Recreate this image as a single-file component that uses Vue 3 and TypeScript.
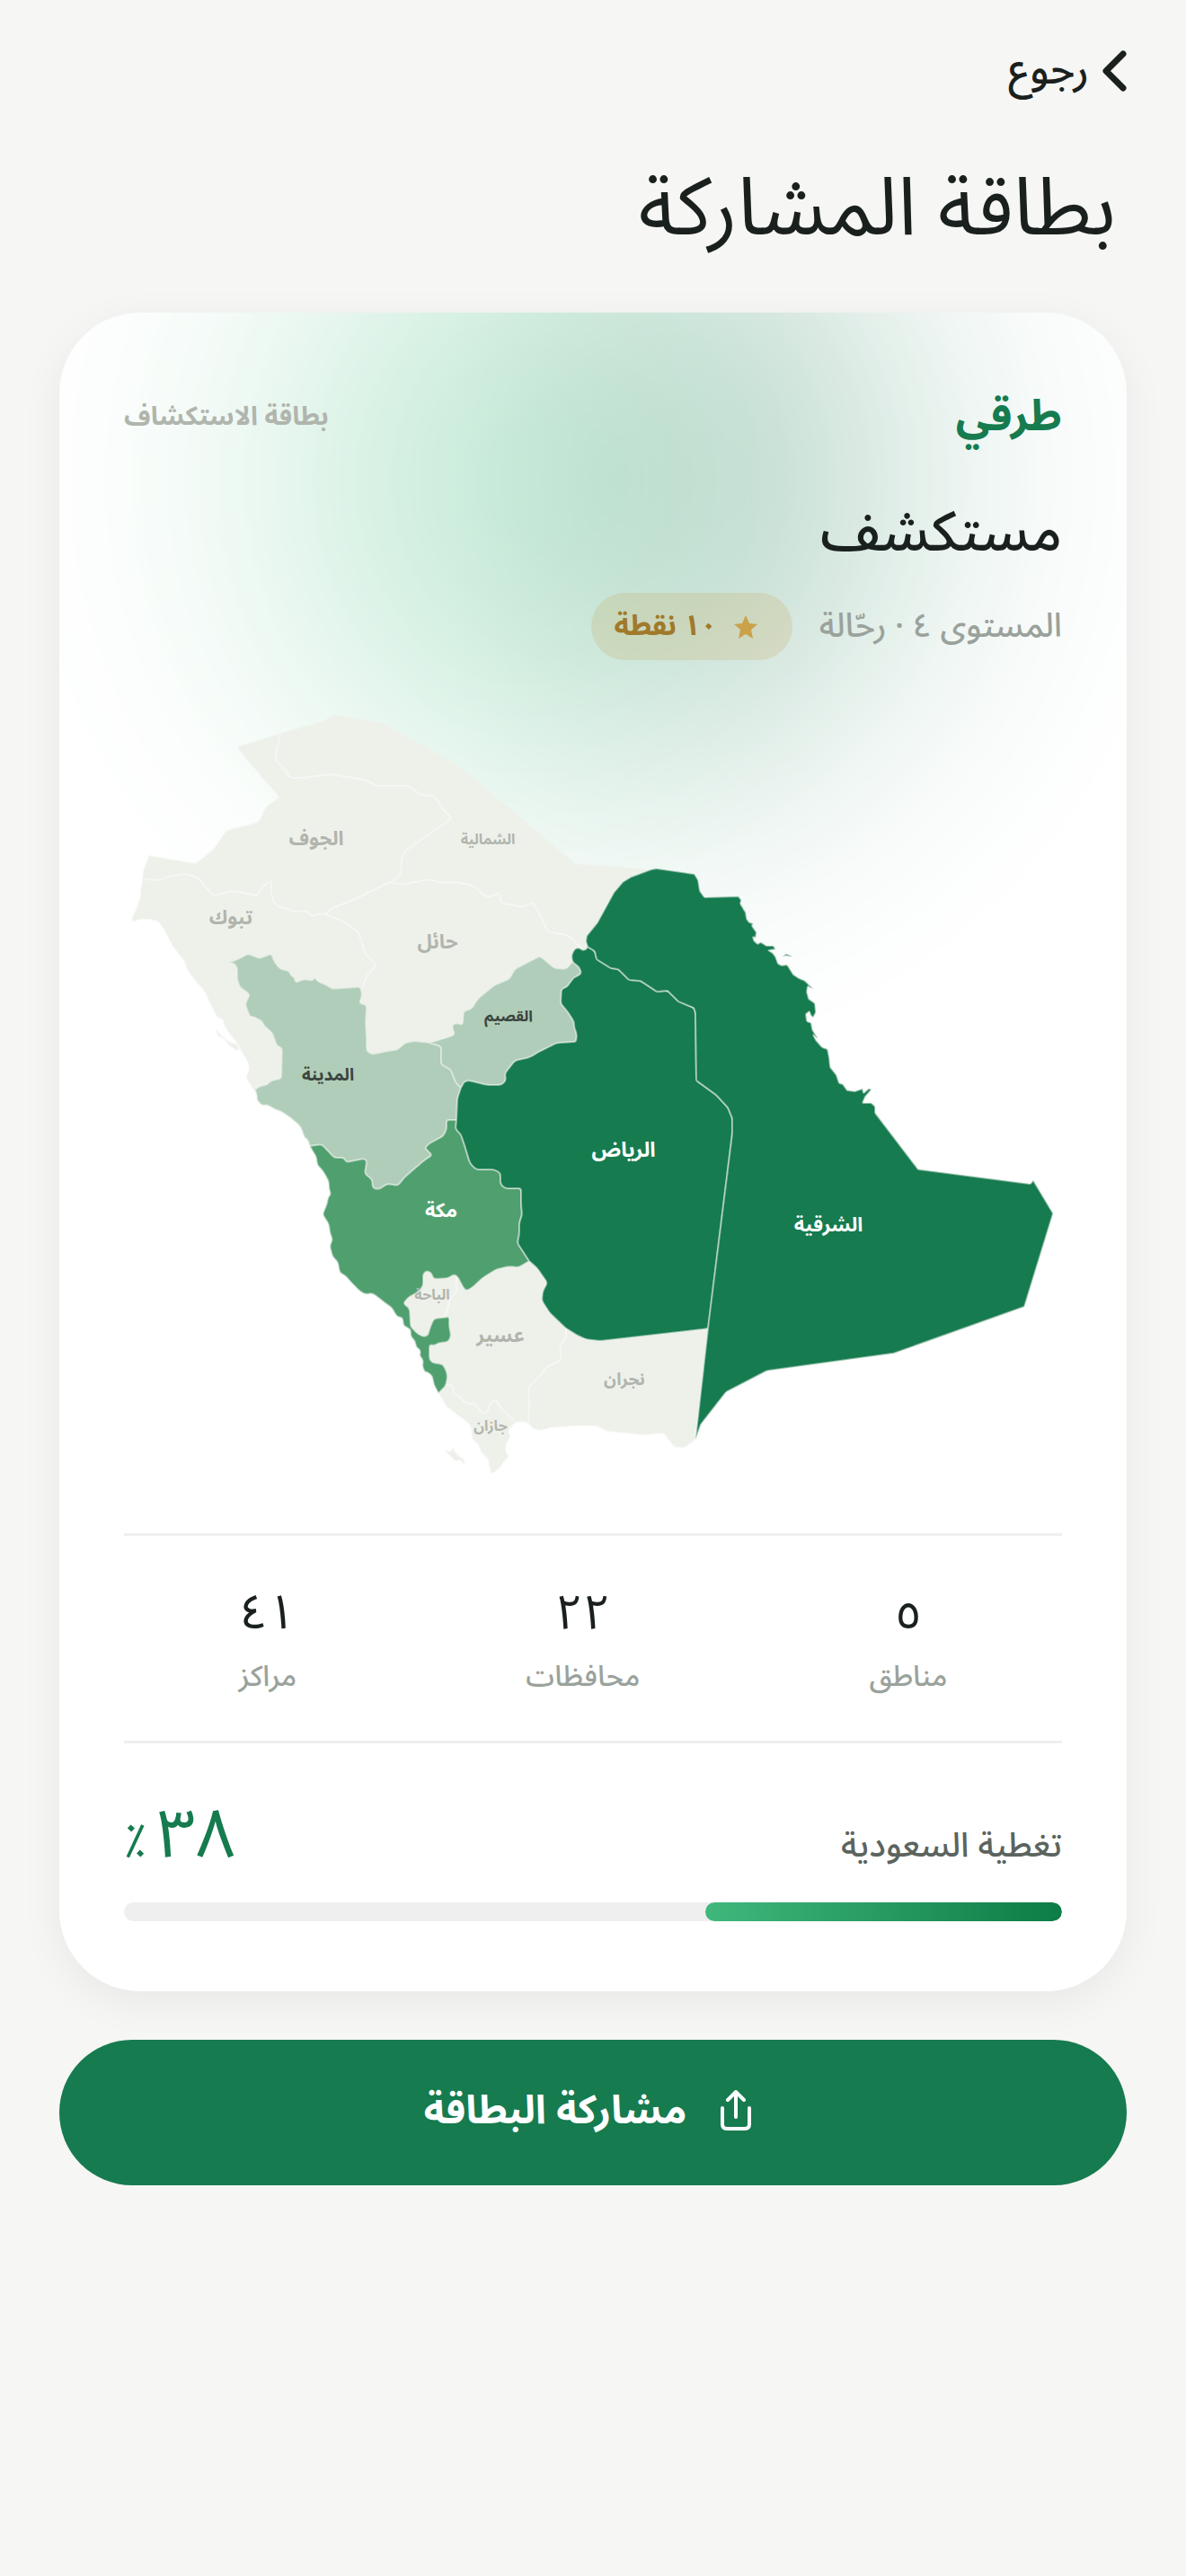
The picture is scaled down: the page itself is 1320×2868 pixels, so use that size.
<script setup lang="ts">
type Point = [number, number]

interface Label {
  text: string
  x: number
  y: number
  size: number
  tone: 'muted' | 'ink' | 'light'
}

const stats = [
  { value: '٥', label: 'مناطق' },
  { value: '٢٢', label: 'محافظات' },
  { value: '٤١', label: 'مراكز' },
]

const coverage = 38

function parse(source: string): Point[] {
  return source
    .trim()
    .split(/\s+/)
    .map((pair) => pair.split(',').map(Number) as Point)
}

function between(a: Point, b: Point, distance: number): string {
  const length = Math.hypot(b[0] - a[0], b[1] - a[1]) || 1
  const t = Math.min(distance / length, 0.5)
  return `${(a[0] + (b[0] - a[0]) * t).toFixed(1)} ${(a[1] + (b[1] - a[1]) * t).toFixed(1)}`
}

// Border lines with every bend rounded off by the given radius.
function line(points: Point[], radius = 4): string {
  let d = `M${points[0].join(' ')}`
  for (let i = 1; i < points.length - 1; i++) {
    d += `L${between(points[i], points[i - 1], radius)}Q${points[i].join(' ')} ${between(points[i], points[i + 1], radius)}`
  }
  return `${d}L${points[points.length - 1].join(' ')}`
}

function area(...parts: Point[][]): string {
  return `${line(parts.flat(), 3)}Z`
}

const back = (points: Point[]): Point[] => [...points].reverse()

// Shared borders
const madinahNorth = parse(`284,1213 290,1209 297,1208 302,1203 313,1201 314,1167 308,1164 303,1150 293,1141 292,1137 282,1132 278,1132 273,1118 278,1107 267,1099 264,1090 264,1077 260,1072 254,1072 265,1068 276,1062 289,1067 302,1062 306,1072 312,1079 322,1081 323,1085 328,1089 329,1094 339,1090 348,1092 350,1088 354,1093 362,1096 370,1101 397,1099 401,1099 403,1107 400,1117 408,1119 407,1140 408,1157 408,1170 414,1174 432,1170 442,1169 451,1161 462,1159 478,1161`)
const madinahQassim = parse(`478,1161 491,1165 491,1185 502,1191 507,1205 513,1211`)
const madinahRiyadh = parse(`513,1211 509,1223 508,1247`)
const madinahMakkah = parse(`508,1247 497,1247 497,1258 493,1265 478,1273 473,1278 481,1286 472,1292 450,1311 443,1320 431,1318 422,1324 415,1323 414,1313 406,1307 408,1293 406,1290 385,1294 383,1289 372,1289 358,1274 345,1276`)
const madinahCoast = parse(`345,1276 342,1268 339,1267 335,1255 329,1249 320,1242 312,1237 308,1236 297,1230 292,1231 286,1225 286,1220`)
const qassimNorth = parse(`478,1161 498,1155 506,1152 503,1142 507,1139 515,1141 516,1126 525,1123 532,1112 550,1097 567,1090 573,1079 600,1065 603,1066 617,1078 630,1079 637,1071`)
const qassimRiyadh = parse(`637,1071 645,1077 647,1084 638,1089 631,1099 625,1101 624,1117 633,1128 639,1138 639,1143 642,1152 641,1160 620,1161 600,1171 590,1177 573,1181 562,1195 563,1203 558,1208 542,1208 522,1203 517,1204 513,1211`)
const makkahRiyadh = parse(`508,1247 507,1257 513,1263 518,1278 523,1295 530,1302 550,1302 557,1306 557,1318 562,1323 580,1323 580,1340 581,1353 578,1361 578,1373 576,1384 589,1404`)
const makkahSouth = parse(`589,1404 577,1411 567,1410 553,1413 538,1422 525,1434 519,1437 516,1434 509,1421 505,1419 499,1423 485,1424 482,1423 480,1417 475,1415 471,1418 471,1432 463,1440 455,1444 449,1451 456,1457 457,1477 465,1485 471,1488 476,1487 479,1477 483,1468 493,1467 500,1466 500,1477 502,1487 499,1494 489,1495 483,1498 478,1497 478,1513 481,1517 493,1519 497,1527 498,1533 496,1543 488,1551`)
const makkahCoast = parse(`488,1551 483,1542 481,1532 475,1527 473,1528 470,1521 471,1514 467,1510 468,1503 463,1500 462,1493 457,1488 457,1480 449,1476 448,1467 442,1466 437,1458 436,1456 425,1448 415,1440 406,1441 400,1437 392,1429 384,1420 378,1417 376,1405 370,1399 367,1387 370,1380 367,1372 366,1363 359,1352 364,1340 365,1333 368,1330 366,1322 366,1316 362,1308 358,1302 353,1297 352,1288 347,1280`)
const riyadhEast = parse(`654,1054 662,1059 664,1068 680,1078 688,1079 700,1091 713,1092 731,1104 743,1103 755,1115 772,1122 774,1127 775,1203 797,1219 810,1233 815,1245 815,1262 788,1479`)
const riyadhSouth = parse(`788,1479 782,1480 667,1493 652,1491 643,1487 630,1479 612,1462 603,1448 604,1438 609,1428 598,1412 589,1404`)

const base = area(
  parse(`166,953 218,962 239,945 252,925 288,916 297,898 312,888 292,865 264,832 312,817 361,803 370,796 429,806 515,856 640,962 720,968 760,1000 760,1300 788,1479 773,1603 762,1611 751,1611 739,1595 717,1597 675,1593 664,1587 638,1587 613,1589 602,1592 593,1590 588,1584 582,1582 574,1583 568,1588 565,1594 568,1600 563,1606 562,1616 566,1622 560,1627 559,1630 552,1637 547,1641 545,1632 544,1624 535,1616 534,1609 526,1602 525,1590 522,1584 508,1574 497,1565 488,1550 490,1535 475,1512 464,1490 453,1465 440,1300 300,1220 284,1215 279,1207 274,1200 278,1192 277,1183 270,1172 265,1162 257,1152 250,1142 249,1135 242,1132 237,1122 228,1103 218,1092 208,1078 207,1072 192,1052 185,1038 178,1027 175,1025 167,1023 155,1023 148,1026 147,1022 152,1013 157,998 157,990 159,980 160,970`),
)
const madinah = area(madinahNorth, madinahQassim, madinahRiyadh, madinahMakkah, madinahCoast)
const qassim = area(qassimNorth, qassimRiyadh, back(madinahQassim))
const makkah = area(back(madinahMakkah), makkahRiyadh, makkahSouth, makkahCoast)
const riyadh = area(
  riyadhEast,
  riyadhSouth,
  back(makkahRiyadh),
  back(madinahRiyadh),
  back(qassimRiyadh),
  parse(`636,1063 640,1056 645,1055 648,1058 652,1057`),
)
const eastern = line(
  [
    ...parse(`654,1054 652,1048 653,1042 665,1027 683,994 693,982 703,976 725,968 730,967 773,973 777,980 779,992 784,999 822,998 825,1002 824,1006 827,1011 830,1016 831,1023 834,1027 838,1028 837,1031 842,1038 841,1044 838,1043 839,1047 843,1051 847,1049 853,1053 861,1053 863,1057 855,1058 860,1061 863,1065 866,1073 870,1075 876,1074 883,1085 889,1089 896,1092 900,1096 905,1101 899,1098 898,1104 900,1112 907,1117 908,1127 905,1133 902,1130 901,1126 897,1129 898,1137 903,1139 904,1146 910,1156 905,1152 908,1158 915,1166 921,1168 923,1178 924,1188 931,1197 934,1206 938,1207 943,1214 952,1215 960,1212 961,1217 967,1212 970,1213 963,1221 960,1228 970,1228 974,1232 974,1239 1022,1302 1147,1318 1150,1314 1172,1351 1140,1455 994,1507 854,1526 808,1550 780,1586 774,1603`),
    ...back(riyadhEast),
  ],
  1,
)

const innerBorders = [
  `312,817 307,840 307,847 314,853 323,866 338,866 367,862 407,868 419,875 455,875 468,885 482,886 485,888 493,901 503,911 450,948 447,955 446,973 437,982`,
  `160,979 180,980 185,976 207,973 220,977 237,997 260,992 286,997 292,987 302,980 302,997 307,1008 328,1015 341,1014 347,1020 357,1017 362,1018`,
  `362,1018 368,1012 397,1000 434,982 447,985 477,979 493,983 507,982 527,986 540,998 546,998 556,994 558,1006 570,1007 580,1010 593,1005 602,1020 608,1035 613,1038 632,1041 643,1052 648,1057`,
  `362,1018 383,1026 399,1038 407,1063 419,1074 408,1087 403,1100`,
  `509,1421 507,1430 509,1438 500,1446 499,1455 495,1466`,
  `497,1542 504,1542 505,1553 512,1555 517,1562 528,1563 539,1575 543,1570 546,1562 552,1558 555,1565 563,1573 573,1583`,
  `630,1479 630,1490 623,1497 625,1512 620,1517 609,1521 602,1531 588,1545 589,1560 588,1584`,
].map((source) => line(parse(source)))

const islands = [
  'M241 1147l4 5 5 4-7-3zM251 1158l6 3 6 2 3 5-3 1-8-6z',
  'M496 1615l5 2 4-4 1 4 5 5 4 2 2 6-5-5-5 1-5-5z',
]
const easternIsles = 'M871 1065l4-3 7 3-8-1z'

const labels: Label[] = [
  { text: 'الجوف', x: 352, y: 941, size: 22, tone: 'muted' },
  { text: 'الشمالية', x: 543, y: 940, size: 16, tone: 'muted' },
  { text: 'تبوك', x: 257, y: 1029, size: 22, tone: 'muted' },
  { text: 'حائل', x: 487, y: 1056, size: 22, tone: 'muted' },
  { text: 'القصيم', x: 566, y: 1137, size: 17, tone: 'ink' },
  { text: 'المدينة', x: 365, y: 1203, size: 19, tone: 'ink' },
  { text: 'الرياض', x: 694, y: 1288, size: 23, tone: 'light' },
  { text: 'مكة', x: 491, y: 1355, size: 22, tone: 'light' },
  { text: 'الشرقية', x: 922, y: 1371, size: 22, tone: 'light' },
  { text: 'الباحة', x: 481, y: 1447, size: 16, tone: 'muted' },
  { text: 'عسير', x: 557, y: 1494, size: 22, tone: 'muted' },
  { text: 'نجران', x: 695, y: 1542, size: 19, tone: 'muted' },
  { text: 'جازان', x: 546, y: 1593, size: 16, tone: 'muted' },
]
</script>

<template>
  <main class="page" dir="rtl" lang="ar">
    <nav class="nav">
      <button class="back" type="button">
        <svg class="chevron" viewBox="0 0 28 46" aria-hidden="true">
          <path d="M24 4 5 23l19 19" />
        </svg>
        <span>رجوع</span>
      </button>
    </nav>

    <h1 class="title">بطاقة المشاركة</h1>

    <article class="card">
      <header class="card-head">
        <span class="brand">طرقي</span>
        <span class="kind">بطاقة الاستكشاف</span>
      </header>
      <h2 class="name">مستكشف</h2>
      <div class="meta">
        <span class="level">المستوى ٤ · رحّالة</span>
        <span class="points">
          <svg class="star" viewBox="0 0 28 28" aria-hidden="true">
            <path d="m14 1 4 9 9 1-7 6 2 10-8-5-8 5 2-10-7-6 9-1z" />
          </svg>
          <span>١٠ نقطة</span>
        </span>
      </div>

      <svg class="map" viewBox="138 783 1044 876" role="img" aria-label="خريطة المناطق">
        <path class="region none" :d="base" />
        <path v-for="d in islands" :key="d" class="region none" :d="d" />
        <path v-for="d in innerBorders" :key="d" class="border" :d="d" />
        <path class="region low" :d="madinah" />
        <path class="region low" :d="qassim" />
        <path class="region mid" :d="makkah" />
        <path class="region full" :d="riyadh" />
        <path class="region full" :d="eastern" />
        <path class="region full" :d="easternIsles" />
        <text
          v-for="label in labels"
          :key="label.text"
          :class="['label', label.tone]"
          :x="label.x"
          :y="label.y"
          :font-size="label.size"
        >{{ label.text }}</text>
      </svg>

      <section class="stats">
        <div v-for="stat in stats" :key="stat.label" class="stat">
          <span class="value">{{ stat.value }}</span>
          <span class="caption">{{ stat.label }}</span>
        </div>
      </section>

      <section class="coverage">
        <div class="coverage-row">
          <span class="coverage-label">تغطية السعودية</span>
          <span class="percent"><span class="number">٣٨</span><span class="sign">٪</span></span>
        </div>
        <div class="bar" role="progressbar" aria-label="تغطية السعودية" :aria-valuenow="coverage" aria-valuemin="0" aria-valuemax="100">
          <div class="fill" :style="{ width: coverage + '%' }"></div>
        </div>
      </section>
    </article>

    <button class="share" type="button">
      <svg class="share-icon" viewBox="0 0 34 46" aria-hidden="true">
        <path d="M17 30V3M8 11l9-9 9 9M2 20v18q0 5 5 5h20q5 0 5-5V20" />
      </svg>
      <span>مشاركة البطاقة</span>
    </button>
  </main>
</template>

<style>
html,
body {
  background: #f6f6f4;
}
</style>

<style scoped>
.page {
  box-sizing: border-box;
  min-height: 100vh;
  padding: 44px 66px 66px;
  background: #f6f6f4;
  color: #1a201d;
  font-family: "Noto Sans Arabic", "IBM Plex Sans Arabic", "Noto Sans", "DejaVu Sans", sans-serif;
}
.nav {
  display: flex;
}
.back {
  display: flex;
  align-items: center;
  gap: 14px;
  height: 72px;
  padding: 0 0 2px;
  border: 0;
  background: none;
  color: inherit;
  font-family: inherit;
  font-size: 46px;
  line-height: 68px;
  font-weight: 500;
}
.chevron {
  width: 28px;
  height: 46px;
  fill: none;
  stroke: currentColor;
  stroke-width: 7;
  stroke-linecap: round;
  stroke-linejoin: round;
}
.title {
  margin: 56px 12px 56px;
  font-size: 90px;
  line-height: 120px;
  font-weight: 400;
}
.card {
  position: relative;
  z-index: 0;
  padding: 72px 72px 78px;
  border-radius: 90px;
  background: #ffffff;
  box-shadow: 0 12px 48px rgba(0, 0, 0, 0.06);
  overflow: hidden;
}
.card::before {
  content: "";
  position: absolute;
  inset: 0;
  z-index: -1;
  background: linear-gradient(90deg, #3dba7c 37%, #167b4f 68%);
  mask-image: radial-gradient(circle 660px at 50% 186px, rgba(0, 0, 0, 0.3), rgba(0, 0, 0, 0.28) 15%, rgba(0, 0, 0, 0.24) 28%, rgba(0, 0, 0, 0.185) 40%, rgba(0, 0, 0, 0.12) 53%, rgba(0, 0, 0, 0.06) 68%, rgba(0, 0, 0, 0.02) 83%, transparent);
}
.card-head {
  display: flex;
  align-items: center;
  justify-content: space-between;
  height: 88px;
}
.brand {
  color: #167b4f;
  font-size: 48px;
  line-height: 88px;
  font-weight: 700;
}
.kind {
  color: #b0b5ad;
  font-size: 29px;
  line-height: 88px;
  font-weight: 700;
}
.name {
  margin: 32px 0 12px;
  font-size: 62px;
  line-height: 108px;
  font-weight: 500;
}
.meta {
  display: flex;
  align-items: center;
  gap: 30px;
  height: 75px;
}
.level {
  color: #9aa29c;
  font-size: 37px;
  line-height: 75px;
  font-weight: 500;
}
.points {
  display: flex;
  align-items: center;
  gap: 18px;
  padding-inline: 38px 26px;
  border-radius: 38px;
  background: rgba(201, 162, 74, 0.2);
  color: #a07a2a;
  font-size: 32px;
  line-height: 75px;
  font-weight: 700;
}
.star {
  width: 28px;
  height: 28px;
  fill: #c9a24a;
}
.map {
  display: block;
  width: 100%;
  height: auto;
  margin: 48px 0;
}
.region {
  stroke: rgba(240, 244, 238, 0.5);
  stroke-width: 2;
  stroke-linejoin: round;
}
.none {
  fill: #eef0ea;
}
.low {
  fill: #afcdb8;
}
.mid {
  fill: #509f6f;
}
.full {
  fill: #167b4f;
}
.border {
  fill: none;
  stroke: #f6f7f4;
  stroke-width: 2;
}
.label {
  font-weight: 700;
  text-anchor: middle;
}
.label.muted {
  fill: #b0b5ad;
}
.label.ink {
  fill: #3c443f;
}
.label.light {
  fill: #ffffff;
}
.stats {
  display: flex;
  justify-content: space-around;
  padding: 44px 0 42px;
  border-top: 3px solid #efefef;
  border-bottom: 3px solid #efefef;
}
.stat {
  display: flex;
  flex-direction: column;
  align-items: center;
}
.value {
  font-size: 54px;
  line-height: 84px;
}
.caption {
  color: #9aa29c;
  font-size: 32px;
  line-height: 58px;
  font-weight: 500;
}
.coverage-row {
  display: flex;
  align-items: baseline;
  justify-content: space-between;
  margin: 56px 0 28px;
}
.coverage-label {
  color: #5c645f;
  font-size: 38px;
  line-height: 60px;
  font-weight: 500;
}
.percent {
  color: #167b4f;
}
.number {
  font-size: 76px;
  line-height: 93px;
}
.sign {
  margin-inline-start: 12px;
  font-size: 52px;
  line-height: 60px;
}
.bar {
  height: 21px;
  border-radius: 11px;
  background: #efefef;
  overflow: hidden;
}
.fill {
  height: 100%;
  border-radius: 11px;
  background: linear-gradient(90deg, #40b87c, #0d7c46);
}
.share {
  display: flex;
  align-items: center;
  justify-content: center;
  gap: 38px;
  width: 100%;
  height: 162px;
  margin-top: 54px;
  padding: 0 12px 4px 0;
  border: 0;
  border-radius: 81px;
  background: #167b4f;
  color: #ffffff;
  font-family: inherit;
  font-size: 44px;
  line-height: 72px;
  font-weight: 700;
}
.share-icon {
  width: 34px;
  height: 46px;
  fill: none;
  stroke: currentColor;
  stroke-width: 4;
  stroke-linecap: round;
  stroke-linejoin: round;
}
</style>
